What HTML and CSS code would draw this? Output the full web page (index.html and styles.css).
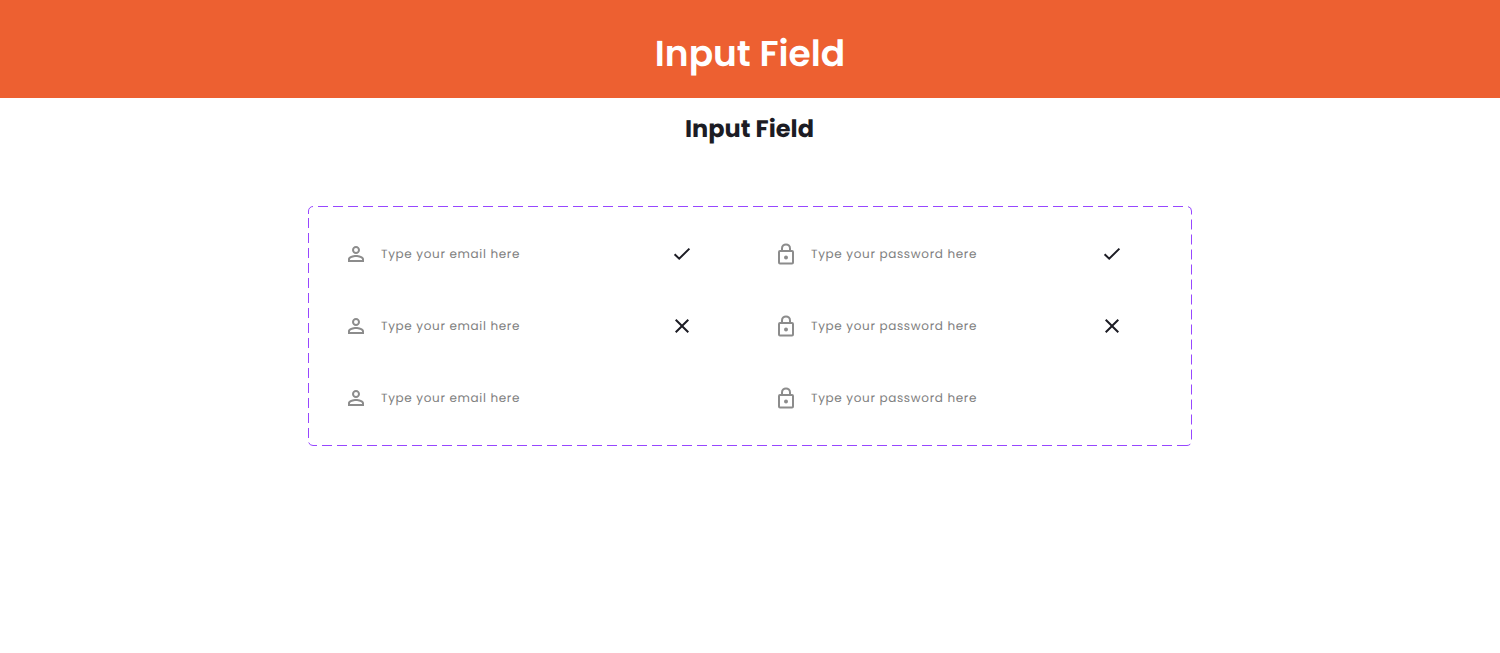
FILE: index.html
```html
<!DOCTYPE html>
<html lang="en">
<head>
<meta charset="utf-8">
<title>Input Field</title>
<link rel="stylesheet" href="styles.css">
</head>
<body>
<svg class="sprite" aria-hidden="true">
  <symbol id="person" viewBox="0 0 24 24"><path d="M12 6a2 2 0 1 1 0 4 2 2 0 0 1 0-4m0 9c2.7 0 5.8 1.29 6 2v1H6v-.99c.2-.72 3.3-2.01 6-2.01M12 4C9.79 4 8 5.79 8 8s1.79 4 4 4 4-1.79 4-4-1.79-4-4-4zm0 9c-2.67 0-8 1.34-8 4v3h16v-3c0-2.66-5.33-4-8-4z"/></symbol>
  <symbol id="lock" viewBox="0 0 24 24"><g fill="none" stroke="currentColor" stroke-width="2"><rect x="5" y="8.9" width="14" height="12.7" rx="1"/><path d="M8 9V6.4a4 4 0 0 1 8 0V9"/></g><circle cx="12" cy="15.4" r="2"/></symbol>
  <symbol id="check" viewBox="0 0 24 24"><path d="M4.6 12.2 9.2 16.7 19.4 6.6" fill="none" stroke="currentColor" stroke-width="2"/></symbol>
  <symbol id="close" viewBox="0 0 24 24"><path d="M19 6.41 17.59 5 12 10.59 6.41 5 5 6.41 10.59 12 5 17.59 6.41 19 12 13.41 17.59 19 19 17.59 13.41 12z"/></symbol>
</svg>
<header class="banner"><h1 class="banner-title">Input Field</h1></header>
<main class="content">
  <h2 class="section-title">Input Field</h2>
  <section class="variants">
    <svg class="outline" viewBox="0 0 884 240" aria-hidden="true">
      <path class="dash" d="M10 .5H879"/>
      <path class="dash" d="M883.5 13.5V234"/>
      <path class="dash" d="M14 239.5H879"/>
      <path class="dash" d="M.5 12V233"/>
      <path d="M.5 8V5A4.5 4.5 0 0 1 5 .5M880 .6A4.5 4.5 0 0 1 883.5 5V8.5M882.3 238.1A4.5 4.5 0 0 1 879 239.5M9 239.5H5A4.5 4.5 0 0 1 .7 236.5"/>
    </svg>
    <div class="field"><svg class="icon muted"><use href="#person"/></svg><span class="label">Type your email here</span><svg class="icon"><use href="#check"/></svg></div>
    <div class="field"><svg class="icon muted"><use href="#lock"/></svg><span class="label">Type your password here</span><svg class="icon"><use href="#check"/></svg></div>
    <div class="field"><svg class="icon muted"><use href="#person"/></svg><span class="label">Type your email here</span><svg class="icon"><use href="#close"/></svg></div>
    <div class="field"><svg class="icon muted"><use href="#lock"/></svg><span class="label">Type your password here</span><svg class="icon"><use href="#close"/></svg></div>
    <div class="field"><svg class="icon muted"><use href="#person"/></svg><span class="label">Type your email here</span></div>
    <div class="field"><svg class="icon muted"><use href="#lock"/></svg><span class="label">Type your password here</span></div>
  </section>
</main>
</body>
</html>
```
FILE: styles.css
```css
* { box-sizing: border-box; }
body {
  margin: 0;
  min-height: 653px;
  background: #fff;
  color: #1c1c24;
  font-family: Poppins, Inter, "Open Sans", sans-serif;
  text-rendering: geometricPrecision;
}
.sprite { display: none; }
.banner {
  height: 98px;
  padding-top: 27px;
  background: #ed6031;
  color: #fff;
  text-align: center;
}
.banner-title {
  margin: 0;
  font-size: 36px;
  line-height: 54px;
  font-weight: 600;
}
.content {
  display: flex;
  flex-direction: column;
  align-items: center;
}
.section-title {
  margin: 14px 1px 58px 0;
  font-size: 24px;
  line-height: 36px;
  font-weight: 700;
}
.variants {
  position: relative;
  display: grid;
  grid-template-columns: 350px 350px;
  grid-auto-rows: 24px;
  gap: 48px 80px;
  width: 884px;
  height: 240px;
  padding: 36px;
}
.outline {
  position: absolute;
  inset: 0;
  width: 884px;
  height: 240px;
  fill: none;
  stroke: #9747ff;
  stroke-width: 1;
}
.dash { stroke-dasharray: 10 5; }
.field {
  display: flex;
  align-items: center;
  gap: 13px;
}
.icon {
  flex: none;
  width: 24px;
  height: 24px;
  fill: currentColor;
}
.muted { color: #8c8c8c; }
.label {
  flex: none;
  width: 276px;
  padding-top: 2px;
  color: #7e7e7e;
  font-size: 12px;
  line-height: 22px;
  letter-spacing: 0.66px;
  white-space: nowrap;
}
```
